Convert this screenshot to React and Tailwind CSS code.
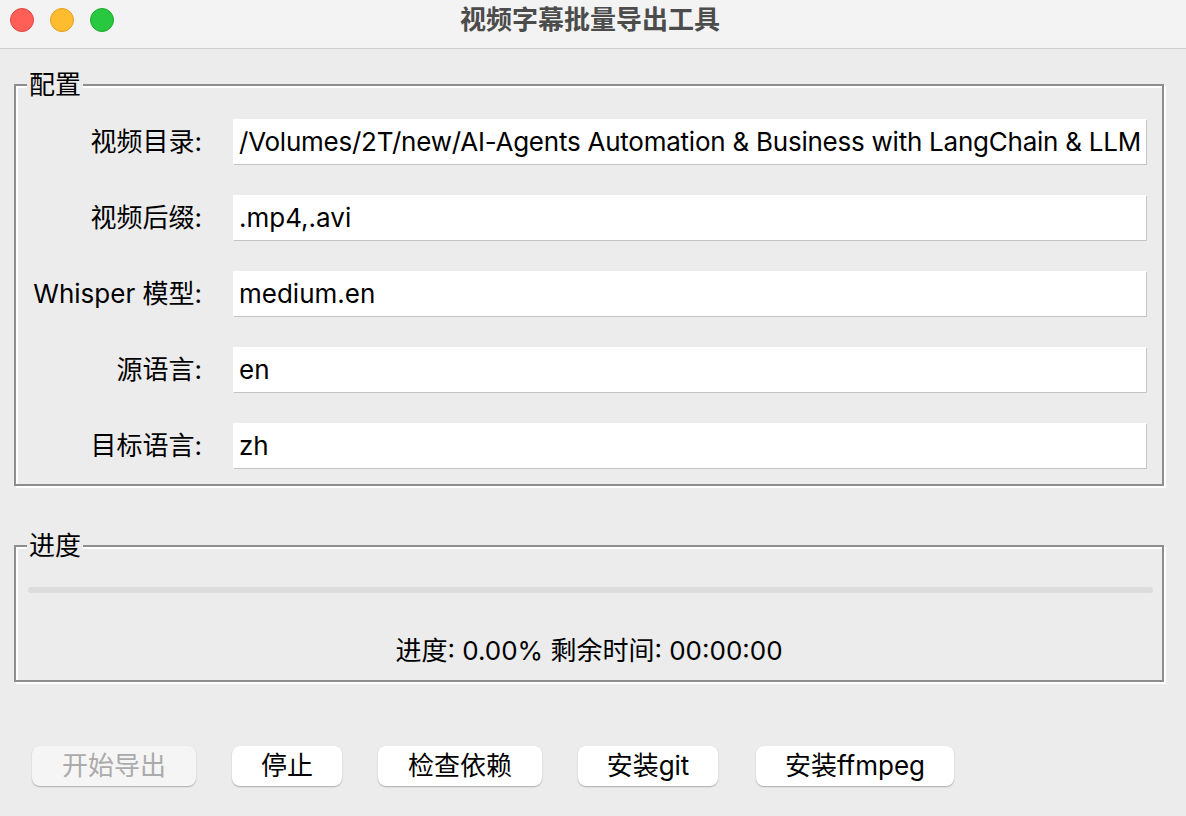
import React from "react";

const FONT = { fontFamily: '"Inter", "Noto Sans CJK SC", sans-serif' };

function Row({ label, value, tight }) {
  return (
    <div className="flex items-center h-[45px]">
      <div className="w-[186px] text-right text-[26px] text-black leading-none">{label}</div>
      <div
        className={
          "ml-[31px] w-[913px] h-[45px] bg-white shadow-[1px_1px_0_#c4c4c4] flex items-center pl-[6px] text-[26px] text-black whitespace-nowrap overflow-hidden leading-none " +
          (tight ? "tracking-[-0.24px]" : "")
        }
      >
        {value}
      </div>
    </div>
  );
}

function Group({ title, children, className }) {
  return (
    <div className={"relative border-2 border-[#8e8e8e] shadow-[inset_2px_2px_0_#fff,2px_2px_0_#fff] " + className}>
      <div className="absolute left-[11px] top-[-14px] bg-[#ececec] px-[2px] text-[26px] leading-[26px] text-black">{title}</div>
      {children}
    </div>
  );
}

function Btn({ children, w, disabled }) {
  return (
    <div
      className={
        "h-[40px] rounded-[8px] flex items-center justify-center text-[26px] leading-none shadow-[0_1px_1.5px_rgba(0,0,0,0.28)] " +
        (disabled ? "bg-[#f5f5f5] text-[#ababab]" : "bg-white text-black")
      }
      style={{ width: w }}
    >
      {children}
    </div>
  );
}

export default function App() {
  return (
    <div className="w-[1186px] h-[816px] bg-[#ececec] overflow-hidden" style={FONT}>
      <div className="relative h-[49px] bg-[#f4f3f3] border-b border-[#cfcfcf] flex items-center justify-center">
        <div className="absolute left-[10px] top-[8px] flex gap-[16px]">
          <div className="w-[24px] h-[24px] rounded-full bg-[#ff5f57] border border-[#e0443e]" />
          <div className="w-[24px] h-[24px] rounded-full bg-[#febc2e] border border-[#dea123]" />
          <div className="w-[24px] h-[24px] rounded-full bg-[#28c840] border border-[#1aab29]" />
        </div>
        <div className="text-[26px] font-bold text-[#4c4c4c] leading-none -mt-[8px] -ml-[6px]">视频字幕批量导出工具</div>
      </div>

      <div className="pl-[14px] pr-[22px] pt-[35px]">
        <Group title="配置" className="h-[402px] pt-[33px] flex flex-col gap-[31px]">
          <Row label="视频目录:" value="/Volumes/2T/new/AI-Agents Automation & Business with LangChain & LLM" tight />
          <Row label="视频后缀:" value=".mp4,.avi" />
          <Row label="Whisper 模型:" value="medium.en" />
          <Row label="源语言:" value="en" />
          <Row label="目标语言:" value="zh" />
        </Group>

        <Group title="进度" className="mt-[59px] h-[137px] flex flex-col">
          <div className="mt-[40px] ml-[12px] mr-[9px] h-[6px] rounded-full bg-[#dcdcdc]" />
          <div className="mt-[45px] text-center text-[26px] leading-none text-black">进度: 0.00% 剩余时间: 00:00:00</div>
        </Group>

        <div className="mt-[64px] ml-[18px] flex gap-[36px]">
          <Btn w={164} disabled>开始导出</Btn>
          <Btn w={110}>停止</Btn>
          <Btn w={164}>检查依赖</Btn>
          <Btn w={140}>安装git</Btn>
          <div className="ml-[2px]">
            <Btn w={198}>安装ffmpeg</Btn>
          </div>
        </div>
      </div>
    </div>
  );
}
